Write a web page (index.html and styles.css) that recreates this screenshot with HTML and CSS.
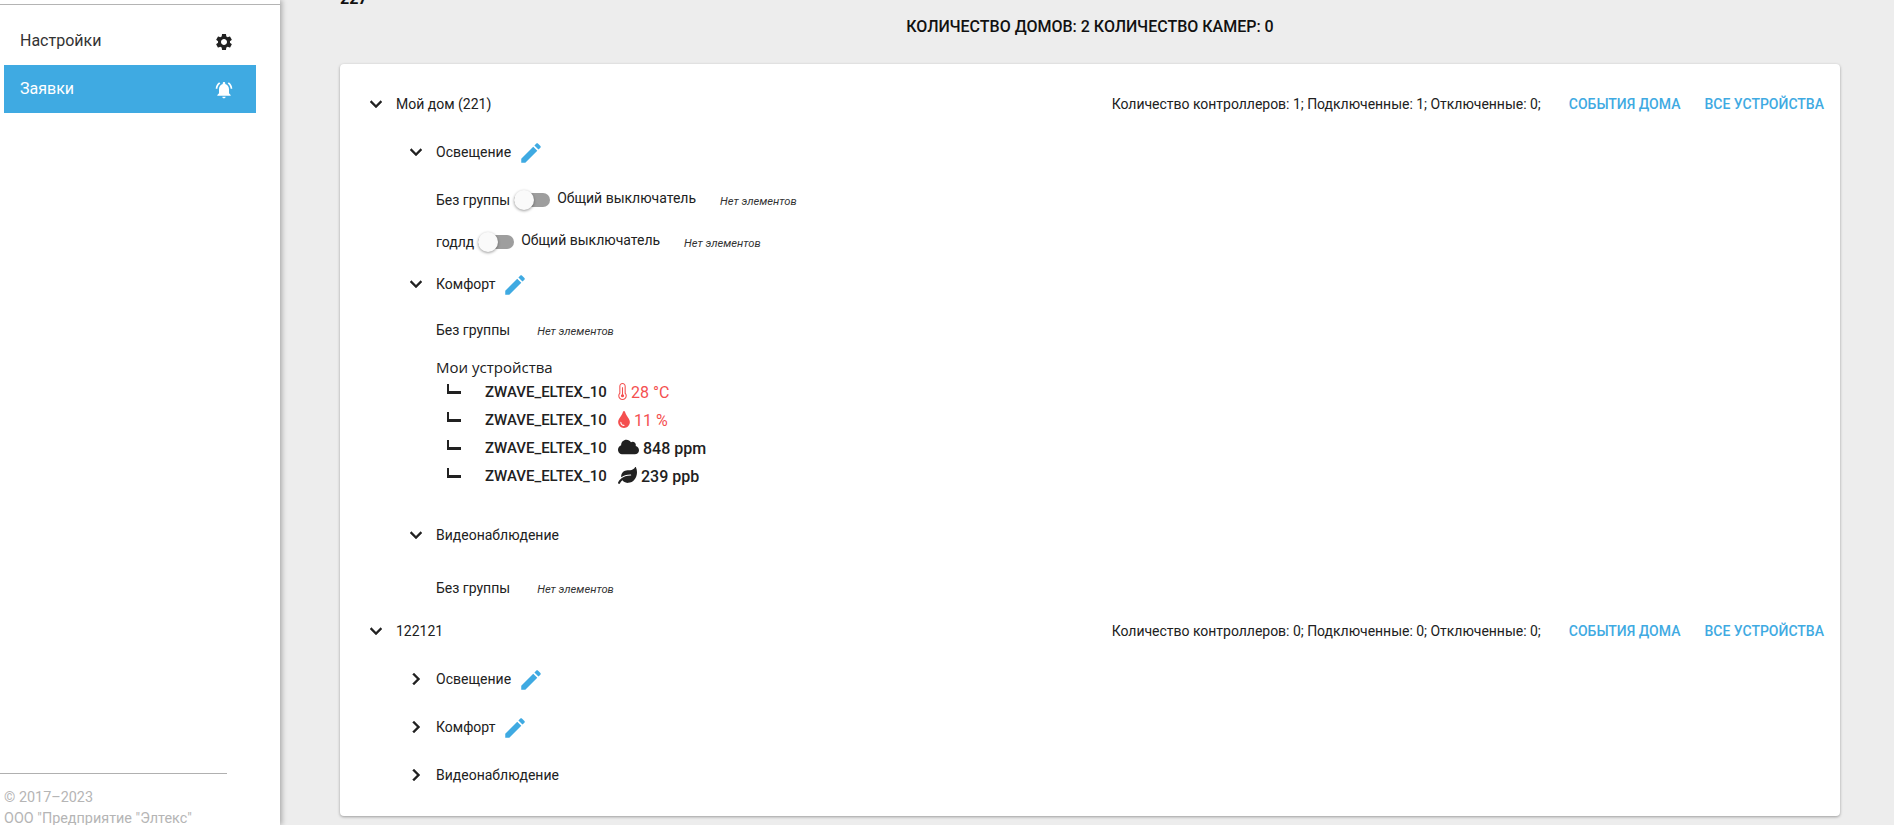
FILE: index.html
```html
<!DOCTYPE html>
<html lang="ru">
<head>
<meta charset="utf-8">
<title>Дома</title>
<link rel="stylesheet" href="styles.css">
</head>
<body>
<svg class="defs" width="0" height="0" aria-hidden="true">
  <symbol id="i-more" viewBox="0 0 24 24"><path d="M16.59 8.59L12 13.17 7.41 8.59 6 10l6 6 6-6z"/></symbol>
  <symbol id="i-right" viewBox="0 0 24 24"><path d="M10 6L8.59 7.41 13.17 12l-4.58 4.59L10 18l6-6z"/></symbol>
  <symbol id="i-pencil" viewBox="0 0 24 24"><path d="M3 17.25V21h3.75L17.81 9.94l-3.75-3.75L3 17.25zM20.71 7.04c.39-.39.39-1.02 0-1.41l-2.34-2.34c-.39-.39-1.02-.39-1.41 0l-1.83 1.83 3.75 3.75 1.83-1.83z"/></symbol>
</svg>
<div class="app">
  <aside class="sidebar">
    <div class="side-top">
      <a class="nav-item">
        <span class="nav-text">Настройки</span>
        <svg class="nav-icon" viewBox="0 0 24 24"><path d="M19.14 12.94c.04-.3.06-.61.06-.94 0-.32-.02-.64-.07-.94l2.03-1.58c.18-.14.23-.41.12-.61l-1.92-3.32c-.12-.22-.37-.29-.59-.22l-2.39.96c-.5-.38-1.03-.7-1.62-.94l-.36-2.54c-.04-.24-.24-.41-.48-.41h-3.84c-.24 0-.43.17-.47.41l-.36 2.54c-.59.24-1.13.57-1.62.94l-2.39-.96c-.22-.08-.47 0-.59.22L2.74 8.87c-.12.21-.08.47.12.61l2.03 1.58c-.05.3-.09.63-.09.94s.02.64.07.94l-2.03 1.58c-.18.14-.23.41-.12.61l1.92 3.32c.12.22.37.29.59.22l2.39-.96c.5.38 1.03.7 1.62.94l.36 2.54c.05.24.24.41.48.41h3.84c.24 0 .44-.17.47-.41l.36-2.54c.59-.24 1.13-.56 1.62-.94l2.39.96c.22.08.47 0 .59-.22l1.92-3.32c.12-.22.07-.47-.12-.61l-2.01-1.58zM12 15.6c-1.98 0-3.6-1.62-3.6-3.6s1.62-3.6 3.6-3.6 3.6 1.62 3.6 3.6-1.62 3.6-3.6 3.6z"/></svg>
      </a>
      <a class="nav-item active">
        <span class="nav-text">Заявки</span>
        <svg class="nav-icon" viewBox="0 0 24 24"><path d="M7.58 4.08L6.15 2.65C3.75 4.48 2.17 7.3 2.03 10.5h2c.15-2.65 1.51-4.97 3.55-6.42zm12.39 6.42h2c-.15-3.2-1.73-6.02-4.12-7.85l-1.42 1.43c2.02 1.45 3.39 3.77 3.54 6.42zM18 11c0-3.07-1.64-5.64-4.5-6.32V4c0-.83-.67-1.5-1.5-1.5s-1.5.67-1.5 1.5v.68C7.63 5.36 6 7.92 6 11v5l-2 2v1h16v-1l-2-2v-5zm-6 11c.14 0 .27-.01.4-.04.65-.14 1.18-.58 1.44-1.18.1-.24.15-.5.15-.78h-4c.01 1.1.9 2 2.01 2z"/></svg>
      </a>
    </div>
    <footer class="side-foot">
      <div class="foot-line">© 2017–2023</div>
      <div class="foot-line">ООО "Предприятие "Элтекс"</div>
    </footer>
  </aside>
  <main class="main">
    <div class="cut-title"><span>227</span></div>
    <h2 class="summary">Количество домов: 2 Количество камер: 0</h2>
    <section class="card">
      <div class="home-row">
        <svg class="chev"><use href="#i-more"/></svg>
        <span class="home-name">Мой дом (221)</span>
        <span class="home-stats">Количество контроллеров: 1; Подключенные: 1; Отключенные: 0;</span>
        <a class="link link-first">События дома</a>
        <a class="link">Все устройства</a>
      </div>

      <div class="sub-row">
        <svg class="chev"><use href="#i-more"/></svg>
        <span>Освещение</span>
        <svg class="pencil"><use href="#i-pencil"/></svg>
      </div>
      <div class="group-list">
        <div class="group-row">
          <span>Без группы</span>
          <span class="switch"><span class="knob"></span></span>
          <span class="switch-label">Общий выключатель</span>
          <em class="empty">Нет элементов</em>
        </div>
        <div class="group-row">
          <span>годлд</span>
          <span class="switch"><span class="knob"></span></span>
          <span class="switch-label">Общий выключатель</span>
          <em class="empty">Нет элементов</em>
        </div>
      </div>

      <div class="sub-row">
        <svg class="chev"><use href="#i-more"/></svg>
        <span>Комфорт</span>
        <svg class="pencil"><use href="#i-pencil"/></svg>
      </div>
      <div class="group-row plain">
        <span>Без группы</span>
        <em class="empty wide">Нет элементов</em>
      </div>

      <div class="devices">
        <div class="devices-title">Мои устройства</div>
        <div class="device">
          <span class="branch"></span>
          <span class="dev-name">ZWAVE_ELTEX_10</span>
          <svg class="dev-icon alert thermo" viewBox="0 0 256 512"><path fill-rule="evenodd" d="M224 299.100V96c0-53-43-96-96-96S32 43 32 96v202.900C12.200 321.300.1 350.900 0 383.400-.2 453.600 57.100 511.500 127.100 512h.9c70.700 0 128-57.300 128-128 0-32.700-12.100-62.300-32-84.900zM128 480c-52.900 0-96-43-96-96 0-27 11-51.700 32-70.700V96c0-35.300 28.700-64 64-64s64 28.700 64 64v217.300c21 19 32 43.700 32 70.700 0 53-43.100 96-96 96zM128 432a48 48 0 0 0 16-93.300V128h-32v210.700A48 48 0 0 0 128 432z"/></svg>
          <span class="dev-val alert-text">28 °C</span>
        </div>
        <div class="device">
          <span class="branch"></span>
          <span class="dev-name">ZWAVE_ELTEX_10</span>
          <svg class="dev-icon alert drop" viewBox="0 0 352 512"><path d="M205.220 22.090c-7.940-28.780-49.440-30.120-58.440 0C100.010 179.850 0 222.720 0 333.910 0 432.350 78.720 512 176 512s176-79.650 176-178.090c0-111.750-99.790-153.340-146.780-311.820zM176 448c-61.750 0-112-50.250-112-112 0-8.840 7.160-16 16-16s16 7.160 16 16c0 44.110 35.890 80 80 80 8.840 0 16 7.160 16 16s-7.160 16-16 16z"/></svg>
          <span class="dev-val alert-text">11 %</span>
        </div>
        <div class="device">
          <span class="branch"></span>
          <span class="dev-name">ZWAVE_ELTEX_10</span>
          <svg class="dev-icon cloud" viewBox="0 32 640 448"><path d="M537.600 226.600c4.100-10.700 6.400-22.400 6.400-34.600 0-53-43-96-96-96-19.700 0-38.100 6-53.300 16.200C367 64.200 315.300 32 256 32c-88.400 0-160 71.600-160 160 0 2.700.1 5.400.2 8.100C40.200 219.800 0 273.200 0 336c0 79.500 64.500 144 144 144h368c70.700 0 128-57.300 128-128 0-61.900-44-113.600-102.400-125.400z"/></svg>
          <span class="dev-val strong">848 ppm</span>
        </div>
        <div class="device">
          <span class="branch"></span>
          <span class="dev-name">ZWAVE_ELTEX_10</span>
          <svg class="dev-icon leaf" viewBox="0 0 576 512"><path d="M546.200 9.700c-5.600-12.500-21.600-13-28.300-1.200C486.900 62.400 431.400 96 368 96h-80C182 96 96 182 96 288c0 7 .8 13.700 1.500 20.500C161.300 262.800 253.400 224 384 224c8.800 0 16 7.200 16 16s-7.200 16-16 16C132.600 256 26 410.100 2.400 468c-6.600 16.300 1.200 34.900 17.500 41.600 16.400 6.800 35-1.100 41.800-17.300 1.500-3.600 20.900-47.900 71.900-90.600 32.400 43.900 94 85.800 174.900 77.200C465.500 467.500 576 326.700 576 154.300c0-50.200-10.800-102.200-29.800-144.600z"/></svg>
          <span class="dev-val strong">239 ppb</span>
        </div>
      </div>

      <div class="sub-row video-open">
        <svg class="chev"><use href="#i-more"/></svg>
        <span>Видеонаблюдение</span>
      </div>
      <div class="group-row plain low">
        <span>Без группы</span>
        <em class="empty wide">Нет элементов</em>
      </div>

      <div class="home-row second">
        <svg class="chev"><use href="#i-more"/></svg>
        <span class="home-name">122121</span>
        <span class="home-stats">Количество контроллеров: 0; Подключенные: 0; Отключенные: 0;</span>
        <a class="link link-first">События дома</a>
        <a class="link">Все устройства</a>
      </div>
      <div class="sub-row">
        <svg class="chev"><use href="#i-right"/></svg>
        <span>Освещение</span>
        <svg class="pencil"><use href="#i-pencil"/></svg>
      </div>
      <div class="sub-row">
        <svg class="chev"><use href="#i-right"/></svg>
        <span>Комфорт</span>
        <svg class="pencil"><use href="#i-pencil"/></svg>
      </div>
      <div class="sub-row">
        <svg class="chev"><use href="#i-right"/></svg>
        <span>Видеонаблюдение</span>
      </div>
    </section>
  </main>
</div>
</body>
</html>
```
FILE: styles.css
```css
* { box-sizing: border-box; }
html, body { margin: 0; height: 100%; overflow: hidden; }
body {
  font-family: Roboto, "Liberation Sans", sans-serif;
  font-size: 14px;
  color: #212121;
  background: #ededed;
}
.defs { display: block; height: 0; }
.app { display: flex; height: 825px; }

.sidebar {
  width: 280px;
  flex: none;
  background: #fff;
  display: flex;
  flex-direction: column;
  justify-content: space-between;
  box-shadow: 2px 0 5px rgba(0, 0, 0, .28);
  position: relative;
  overflow: hidden;
}
.side-top {
  margin-top: 4px;
  border-top: 1px solid #b4b4b4;
  padding: 12px 24px 0 4px;
}
.nav-item {
  height: 48px;
  display: flex;
  align-items: center;
  justify-content: space-between;
  padding: 0 22px 0 16px;
  font-size: 16px;
  color: #333;
}
.nav-text { margin-bottom: 2px; }
.nav-item.active { background: #3faae2; color: #fff; }
.nav-icon { width: 20px; height: 20px; fill: #212121; margin-top: 2px; }
.active .nav-icon { fill: #fff; }
.side-foot {
  width: 227px;
  border-top: 1px solid #b0b0b0;
  padding: 13px 0 0 4px;
  height: 52px;
  color: #b5b5b5;
  font-size: 14.4px;
}
.foot-line { line-height: 21px; white-space: nowrap; }

.main {
  flex: 1;
  min-width: 0;
  padding: 0 54px 0 60px;
}
.cut-title {
  height: 5px;
  overflow: hidden;
  font-weight: 700;
  font-size: 16px;
  color: #111;
}
.cut-title span { display: block; margin-top: -11px; line-height: 20px; }
.summary {
  margin: 0;
  height: 59px;
  padding-top: 12px;
  text-align: center;
  font-size: 16px;
  line-height: 20px;
  font-weight: 500;
  text-transform: uppercase;
  color: #111;
}
.card {
  background: #fff;
  border-radius: 4px;
  height: 752px;
  padding: 16px 16px 0 24px;
  box-shadow: 0 1px 3px rgba(0, 0, 0, .35);
}
.home-row, .sub-row { display: flex; align-items: center; height: 48px; }
.chev { width: 24px; height: 24px; fill: #212121; stroke: #212121; stroke-width: .4; flex: none; }
.home-name { margin-left: 8px; flex: 1; }
.home-stats { margin-right: 28px; letter-spacing: -0.02px; }
.link {
  color: #3faae2;
  font-weight: 500;
  text-transform: uppercase;
  margin-left: 24px;
}
.link-first { margin-left: 0; }

.sub-row { padding-left: 40px; }
.sub-row > span { margin-left: 8px; }
.pencil { width: 26px; height: 26px; fill: #3faae2; margin: 2px 0 0 7px; flex: none; }

.group-list { padding-top: 3px; margin-bottom: -3px; }
.group-row {
  display: flex;
  align-items: center;
  height: 42px;
  padding-left: 72px;
}
.group-row.plain { height: 44px; }
.group-row.low { height: 40px; margin-top: 9px; }
.switch {
  width: 36px;
  height: 14px;
  border-radius: 7px;
  background: #9e9e9e;
  margin-left: 4px;
  position: relative;
  flex: none;
}
.knob {
  position: absolute;
  left: 0;
  top: -3px;
  width: 20px;
  height: 20px;
  border-radius: 50%;
  background: #fafafa;
  box-shadow: 0 1px 3px rgba(0, 0, 0, .4);
}
.switch-label { margin-left: 7px; position: relative; top: -2px; }
.empty {
  margin-left: 24px;
  font-size: 11.2px;
  color: #333;
  position: relative;
  top: 1px;
}
.empty.wide { margin-left: 27px; }

.devices { padding-left: 72px; margin-top: 5px; }
.devices-title {
  font-family: "Open Sans", sans-serif;
  font-size: 15px;
  line-height: 20px;
  margin: 2px 0 1px;
}
.device { display: flex; align-items: center; height: 28px; }
.branch {
  width: 14px;
  height: 10px;
  margin: -7px 0 0 11px;
  border-left: 2px solid #212121;
  border-bottom: 3px solid #212121;
  flex: none;
}
.dev-name { margin-left: 24px; font-size: 15px; font-weight: 500; width: 133px; white-space: nowrap; }
.dev-icon { flex: none; height: 17px; margin-top: -2px; }
.thermo { width: 9px; }
.drop { width: 12px; }
.cloud { width: 21px; height: 16px; fill: #212121; }
.leaf { width: 19px; fill: #212121; }
.alert { fill: #f44f4f; }
.alert-text { color: #f44f4f; }
.dev-val { margin-left: 4px; font-size: 16px; }
.strong { font-weight: 500; }
.video-open { margin-top: 21px; }
.second { margin-top: -1px; }
```
